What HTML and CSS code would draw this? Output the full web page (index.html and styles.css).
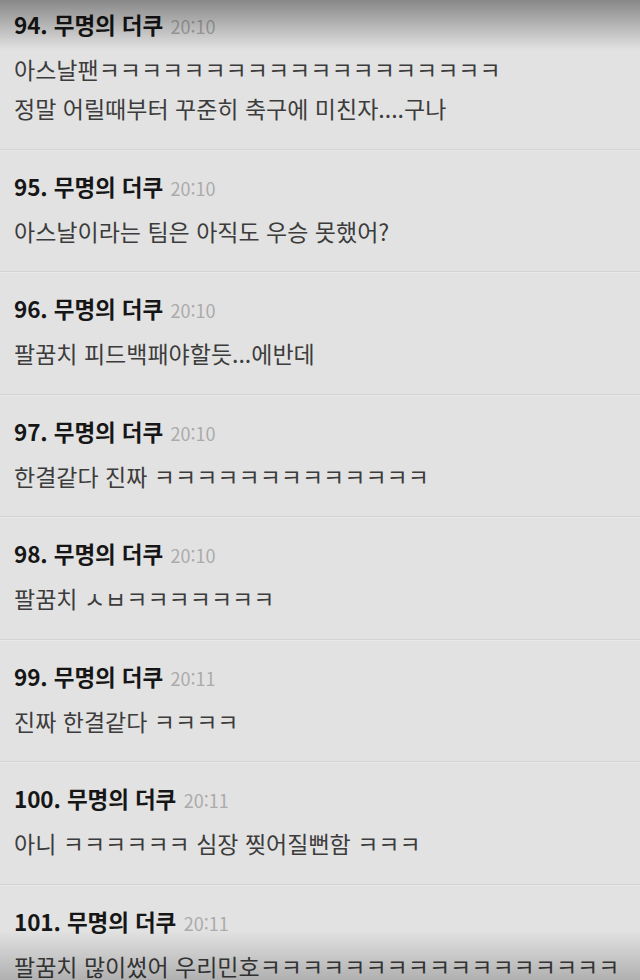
FILE: index.html
```html
<!DOCTYPE html>
<html lang="ko">
<head>
    <meta charset="UTF-8">
    <meta name="viewport" content="width=device-width, initial-scale=1.0">
    <title>댓글</title>
    <link rel="stylesheet" href="styles.css">
</head>
<body>
    <div class="shade-top"></div>
    <div class="comments">
        <div class="comment">
            <div class="head"><span class="num">94. 무명의 더쿠</span> <span class="time">20:10</span></div>
            <div class="text">아스날팬ㅋㅋㅋㅋㅋㅋㅋㅋㅋㅋㅋㅋㅋㅋㅋㅋㅋㅋㅋ<br>정말 어릴때부터 꾸준히 축구에 미친자....구나</div>
        </div>
        <div class="comment">
            <div class="head"><span class="num">95. 무명의 더쿠</span> <span class="time">20:10</span></div>
            <div class="text">아스날이라는 팀은 아직도 우승 못했어?</div>
        </div>
        <div class="comment">
            <div class="head"><span class="num">96. 무명의 더쿠</span> <span class="time">20:10</span></div>
            <div class="text">팔꿈치 피드백패야할듯...에반데</div>
        </div>
        <div class="comment">
            <div class="head"><span class="num">97. 무명의 더쿠</span> <span class="time">20:10</span></div>
            <div class="text">한결같다 진짜 ㅋㅋㅋㅋㅋㅋㅋㅋㅋㅋㅋㅋㅋ</div>
        </div>
        <div class="comment">
            <div class="head"><span class="num">98. 무명의 더쿠</span> <span class="time">20:10</span></div>
            <div class="text">팔꿈치 ㅅㅂㅋㅋㅋㅋㅋㅋㅋ</div>
        </div>
        <div class="comment">
            <div class="head"><span class="num">99. 무명의 더쿠</span> <span class="time">20:11</span></div>
            <div class="text">진짜 한결같다 ㅋㅋㅋㅋ</div>
        </div>
        <div class="comment">
            <div class="head"><span class="num">100. 무명의 더쿠</span> <span class="time">20:11</span></div>
            <div class="text">아니 ㅋㅋㅋㅋㅋㅋ 심장 찢어질뻔함 ㅋㅋㅋ</div>
        </div>
        <div class="comment">
            <div class="head"><span class="num">101. 무명의 더쿠</span> <span class="time">20:11</span></div>
            <div class="text">팔꿈치 많이썼어 우리민호ㅋㅋㅋㅋㅋㅋㅋㅋㅋㅋㅋㅋㅋㅋㅋㅋㅋ</div>
        </div>
    </div>
    <div class="shade-bottom"></div>
</body>
</html>
```

FILE: styles.css
```css
html, body {
    margin: 0;
    height: 980px;
    overflow: hidden;
}

body {
    position: relative;
    background-color: #e2e2e2;
    font-family: "Noto Sans CJK KR", "Noto Sans", sans-serif;
}

.comments {
    margin-top: -12px;
}

.comment {
    padding: 21px 14px 20.5px;
    border-bottom: 1px solid #d3d3d3;
    box-shadow: 0 1px 0 #e9e9e9;
}

.head {
    height: 30px;
    line-height: 30px;
    white-space: nowrap;
}

.num {
    font-size: 22.5px;
    font-weight: bold;
    color: #161616;
    letter-spacing: -0.1px;
}

.time {
    margin-left: 3px;
    font-size: 18px;
    color: #ababab;
}

.text {
    margin-top: 11px;
    font-size: 23px;
    line-height: 39px;
    color: #3c3c3c;
    white-space: nowrap;
}

.shade-top {
    position: absolute;
    top: 0;
    left: 0;
    right: 0;
    height: 50px;
    background: linear-gradient(rgba(0, 0, 0, 0.4), rgba(0, 0, 0, 0));
    pointer-events: none;
    z-index: 2;
}

.shade-bottom {
    position: absolute;
    bottom: 0;
    left: 0;
    right: 0;
    height: 50px;
    background: linear-gradient(rgba(0, 0, 0, 0), rgba(0, 0, 0, 0.22));
    pointer-events: none;
    z-index: 2;
}
```
